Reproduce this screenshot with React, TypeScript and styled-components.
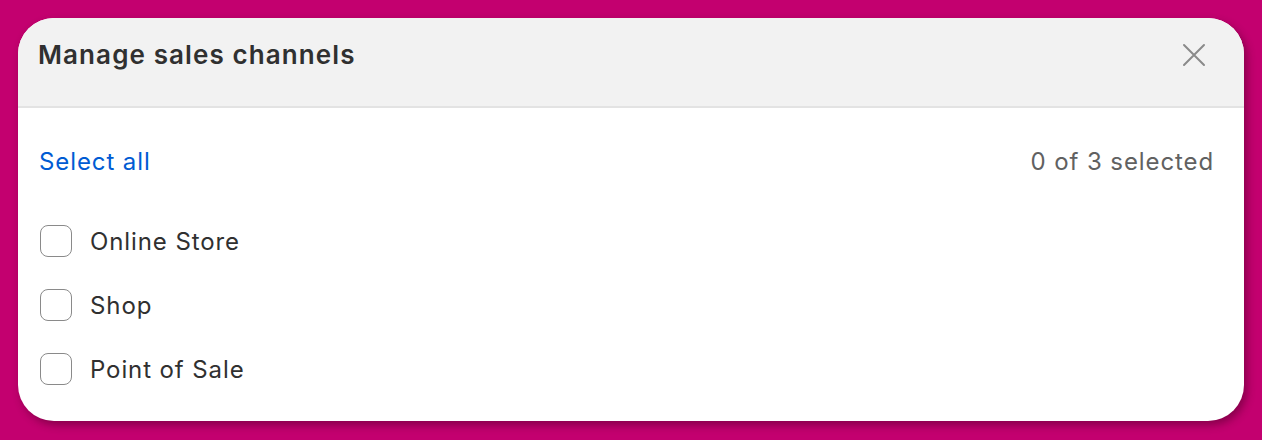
import styled, { createGlobalStyle } from 'styled-components'

const GlobalStyle = createGlobalStyle`
    html, body {
        margin: 0;
        padding: 0;
        background: #c3006f;
    }
    body {
        font-family: Inter, "Noto Sans", sans-serif;
        -webkit-font-smoothing: antialiased;
    }
`

const Page = styled.div`
    padding: 18px;
    height: 440px;
    box-sizing: border-box;
`

const Card = styled.div`
    width: 1226px;
    height: 403px;
    background: #ffffff;
    border-radius: 36px;
    overflow: hidden;
    box-shadow: 3px 4px 8px rgba(60, 0, 30, 0.45);
    display: flex;
    flex-direction: column;
`

const Header = styled.div`
    height: 90px;
    box-sizing: border-box;
    background: #f2f2f2;
    border-bottom: 2px solid #e3e3e3;
    display: flex;
    align-items: flex-start;
    justify-content: space-between;
    padding: 19px 38px 0 20px;
`

const Title = styled.h2`
    margin: 0;
    font-size: 26px;
    line-height: 36px;
    font-weight: 600;
    color: #303030;
    letter-spacing: 1.1px;
`

const CloseButton = styled.button`
    border: none;
    background: none;
    padding: 0;
    margin-top: 6px;
    width: 24px;
    height: 24px;
    cursor: pointer;
    color: #8a8a8a;
    display: flex;
`

const Body = styled.div`
    padding: 33px 30px 20px 21px;
    display: flex;
    flex-direction: column;
`

const SelectRow = styled.div`
    height: 40px;
    display: flex;
    align-items: center;
    justify-content: space-between;
    font-size: 24px;
    letter-spacing: 0.9px;
    margin-bottom: 28px;
`

const SelectAll = styled.a`
    color: #005bd3;
    cursor: pointer;
`

const Count = styled.span`
    color: #616161;
`

const Option = styled.label`
    height: 64px;
    display: flex;
    align-items: center;
    gap: 18px;
    font-size: 24px;
    letter-spacing: 0.9px;
    color: #303030;
    cursor: pointer;
`

const Box = styled.span`
    width: 32px;
    height: 32px;
    margin-left: 1px;
    box-sizing: border-box;
    border: 1.5px solid #8a8a8a;
    border-radius: 8px;
    background: #fff;
`

const channels = ['Online Store', 'Shop', 'Point of Sale']

export default function App() {
    return (
        <Page>
            <GlobalStyle />
            <Card>
                <Header>
                    <Title>Manage sales channels</Title>
                    <CloseButton aria-label="Close">
                        <svg width="24" height="24" viewBox="0 0 24 24" fill="none" stroke="currentColor" strokeWidth="2" strokeLinecap="round">
                            <path d="M2 2 L22 22 M22 2 L2 22" />
                        </svg>
                    </CloseButton>
                </Header>
                <Body>
                    <SelectRow>
                        <SelectAll>Select all</SelectAll>
                        <Count>0 of 3 selected</Count>
                    </SelectRow>
                    {channels.map(name => (
                        <Option key={name}>
                            <Box />
                            {name}
                        </Option>
                    ))}
                </Body>
            </Card>
        </Page>
    )
}
